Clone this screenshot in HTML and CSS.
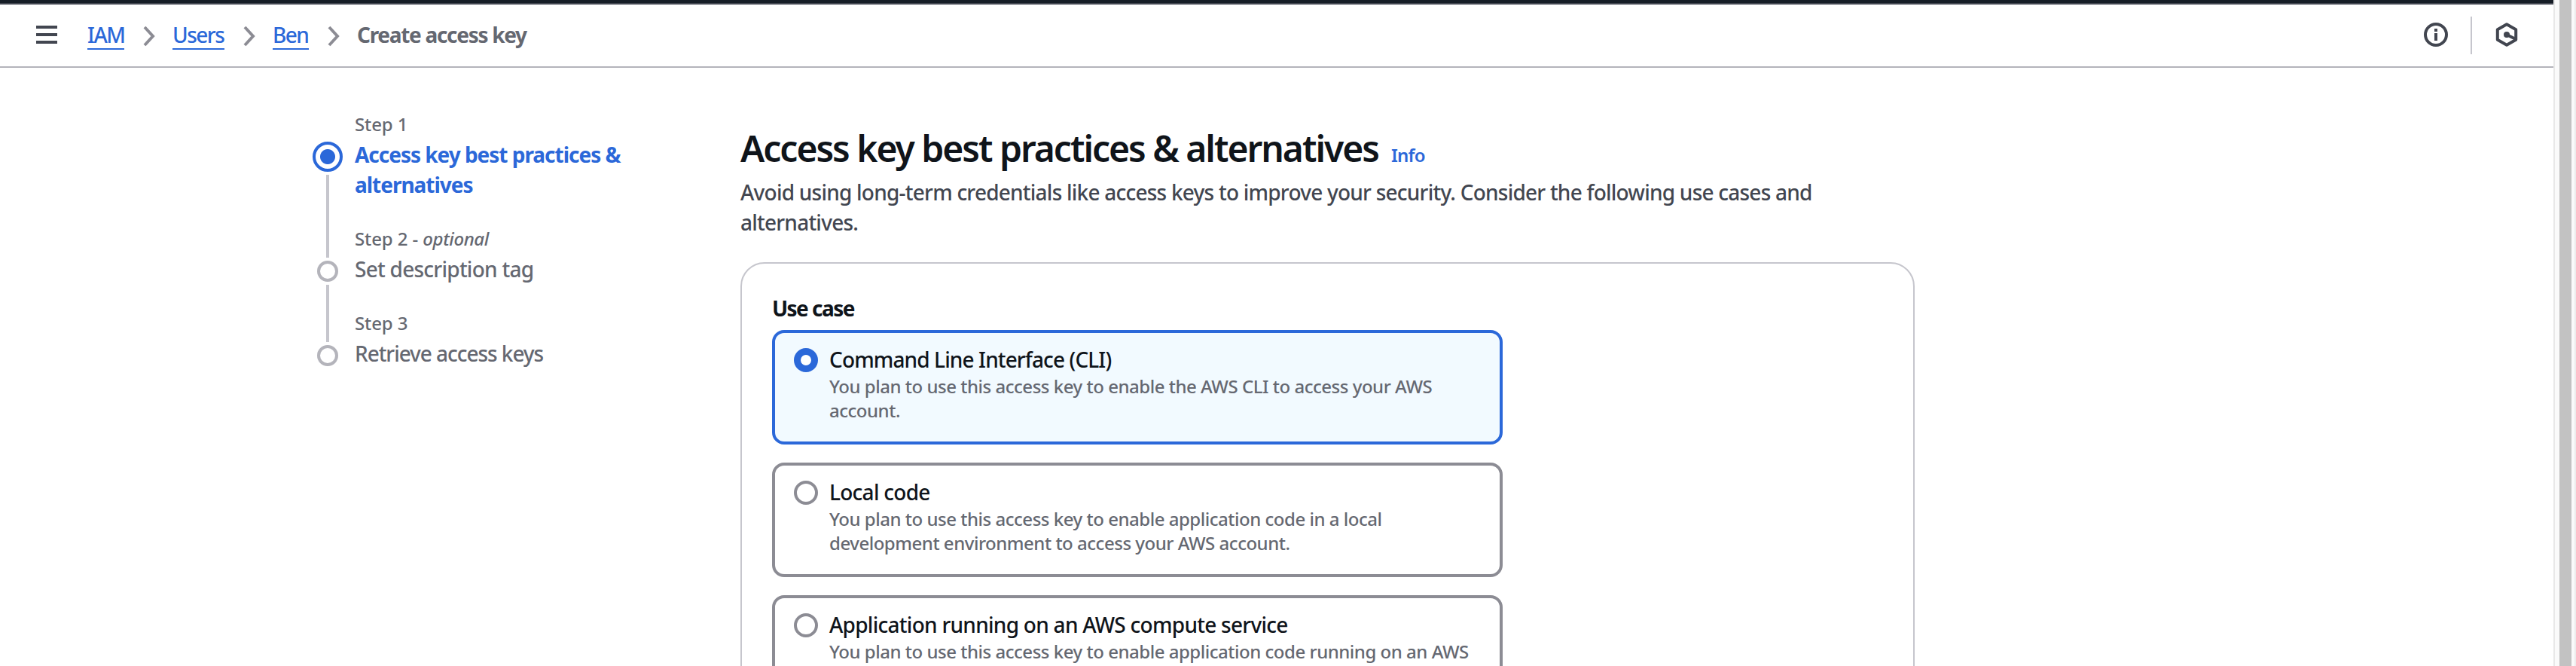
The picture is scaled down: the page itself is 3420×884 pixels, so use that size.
FILE: index.html
```html
<!DOCTYPE html>
<html lang="en">
<head>
<meta charset="utf-8">
<title>Create access key | IAM</title>
<link rel="stylesheet" href="styles.css">
</head>
<body>
<div class="window">
  <div class="page">
    <div class="topnav"></div>
    <header class="toolbar">
      <svg class="menu" width="28" height="24" viewBox="0 0 28 24"><path d="M0 2h28M0 12h28M0 22h28" stroke="#424650" stroke-width="4"/></svg>
      <nav class="crumbs">
        <a class="crumb crumb-iam">IAM</a>
        <svg class="chev" width="16" height="28" viewBox="0 0 16 28"><path d="M2 2l11 12L2 26" fill="none" stroke="#8c8c94" stroke-width="4"/></svg>
        <a class="crumb crumb-users">Users</a>
        <svg class="chev" width="16" height="28" viewBox="0 0 16 28"><path d="M2 2l11 12L2 26" fill="none" stroke="#8c8c94" stroke-width="4"/></svg>
        <a class="crumb crumb-ben">Ben</a>
        <svg class="chev" width="16" height="28" viewBox="0 0 16 28"><path d="M2 2l11 12L2 26" fill="none" stroke="#8c8c94" stroke-width="4"/></svg>
        <span class="crumb-current">Create access key</span>
      </nav>
      <div class="tools">
        <svg width="32" height="32" viewBox="0 0 32 32"><circle cx="16" cy="16" r="14" fill="none" stroke="#424650" stroke-width="4"/><path d="M14 8h4v4h-4zM14 14h4v10h-4z" fill="#424650"/></svg>
        <span class="divider"></span>
        <svg width="32" height="32" viewBox="0 0 32 32"><path d="M16 2.200l12.200 7v13.600L16 29.800l-12.200-7V9.200z" fill="none" stroke="#424650" stroke-width="4" stroke-linejoin="round"/><path d="M16 16l11 5.500" stroke="#424650" stroke-width="4"/><circle cx="16" cy="16" r="4" fill="#424650"/></svg>
      </div>
    </header>
    <div class="layout">
      <aside class="steps">
        <div class="rail">
          <span class="dot-active"></span>
          <span class="line line-long"></span>
          <span class="dot"></span>
          <span class="line line-short"></span>
          <span class="dot"></span>
        </div>
        <div class="step-list">
          <div class="step"><div class="step-label">Step 1</div><div class="step-title current">Access key best practices &amp;<br>alternatives</div></div>
          <div class="step"><div class="step-label">Step 2 - <em>optional</em></div><div class="step-title">Set description tag</div></div>
          <div class="step"><div class="step-label">Step 3</div><div class="step-title retrieve">Retrieve access keys</div></div>
        </div>
      </aside>
      <main class="main">
        <div class="heading"><h1>Access key best practices &amp; alternatives</h1><a class="info">Info</a></div>
        <p class="intro">Avoid using long-term credentials like access keys to improve your security. Consider the following use cases and<br>alternatives.</p>
        <section class="panel">
          <div class="field">Use case</div>
          <div class="cards">
            <div class="card selected">
              <span class="radio"></span>
              <div><div class="card-title cli">Command Line Interface (CLI)</div><div class="card-desc">You plan to use this access key to enable the AWS CLI to access your AWS<br>account.</div></div>
            </div>
            <div class="card">
              <span class="radio"></span>
              <div><div class="card-title">Local code</div><div class="card-desc">You plan to use this access key to enable application code in a local<br>development environment to access your AWS account.</div></div>
            </div>
            <div class="card">
              <span class="radio"></span>
              <div><div class="card-title">Application running on an AWS compute service</div><div class="card-desc">You plan to use this access key to enable application code running on an AWS</div></div>
            </div>
          </div>
        </section>
      </main>
    </div>
  </div>
  <div class="scrollbar"><span class="thumb"></span></div>
</div>
</body>
</html>
```
FILE: styles.css
```css
* { box-sizing: border-box; }
body {
  margin: 0;
  background: #fff;
  color: #0f141a;
  font-family: "Noto Sans", "Open Sans", sans-serif;
  font-size: 28px;
  font-weight: 500;
  line-height: 40px;
  white-space: nowrap;
}
.window { display: flex; width: 3420px; height: 884px; overflow: hidden; }
.page { width: 3390px; height: 884px; overflow: hidden; }
.scrollbar {
  width: 30px;
  padding: 0 6px;
  background: #fafafa;
  border-left: 2px solid #e8e8e8;
  border-right: 2px solid #ededed;
}
.thumb { display: block; width: 16px; height: 100%; background: #c2c2c2; }
.topnav { height: 6px; background: #161d26; border-bottom: 2px solid #424650; }

.toolbar {
  display: flex;
  align-items: flex-start;
  height: 84px;
  padding: 0 46px 0 48px;
  border-bottom: 2px solid #b4b4bb;
}
.menu { margin-top: 28px; }
.crumbs { display: flex; padding: 20px 0 0 40px; }
.crumb { height: 40px; border-bottom: 2px solid #2b68d9; color: #2b68d9; }
.crumb-iam { width: 49px; letter-spacing: -1.5px; }
.crumb-users { width: 69px; letter-spacing: -1.5px; }
.crumb-ben { width: 48px; letter-spacing: -1.6px; }
.chev { margin: 8px 23px 0 25px; }
.crumb-current { color: #656871; font-weight: 700; letter-spacing: -1.3px; }
.tools { display: flex; margin-left: auto; padding-top: 16px; }
.tools svg { margin-top: 8px; }
.divider { width: 2px; height: 50px; margin: 0 30px; background: #c6c6cd; }

.layout { display: flex; align-items: flex-start; padding-left: 415px; }
.steps { display: flex; gap: 16px; width: 568px; padding-top: 59px; }
.rail { display: flex; flex-direction: column; align-items: center; gap: 4px; width: 40px; padding-top: 39px; }
.dot-active {
  width: 40px;
  height: 40px;
  border: 4px solid #2b68d9;
  border-radius: 50%;
  background: radial-gradient(circle, #2b68d9 9.5px, #fff 10.5px);
}
.dot { width: 28px; height: 28px; border: 4px solid #b4b4bb; border-radius: 50%; }
.line { width: 4px; background: #c6c6cd; }
.line-long { height: 110px; }
.line-short { height: 76px; }
.step-list { display: flex; flex-direction: column; gap: 36px; color: #656871; }
.step-label { margin-bottom: 4px; font-size: 24px; line-height: 32px; letter-spacing: -0.1px; }
.step-label em { letter-spacing: -0.4px; }
.step-title { letter-spacing: -0.74px; }
.retrieve { letter-spacing: -1.05px; }
.current { color: #2b68d9; font-weight: 700; letter-spacing: -1.02px; }

.main { width: 1559px; padding-top: 77px; }
.heading { display: flex; align-items: baseline; height: 60px; }
h1 { width: 864px; margin: 0; font-size: 48px; font-weight: 600; line-height: 60px; letter-spacing: -2.02px; }
.info { color: #2b68d9; font-size: 24px; font-weight: 600; letter-spacing: -0.8px; }
.intro { margin: 8px 0 33px; color: #424650; letter-spacing: -0.77px; }
.panel { height: 700px; padding: 39px 40px 0; border: 2px solid #c6c6cd; border-radius: 32px; }
.field { font-weight: 700; letter-spacing: -1.55px; }
.cards { display: flex; flex-direction: column; gap: 24px; width: 970px; padding-top: 9px; }
.card {
  display: flex;
  gap: 15px;
  height: 152px;
  padding: 15px 25px;
  border: 4px solid #8c8c94;
  border-radius: 16px;
}
.radio { width: 32px; height: 32px; margin-top: 5px; border: 4px solid #8c8c94; border-radius: 50%; }
.card-title { letter-spacing: -0.73px; }
.cli { letter-spacing: -0.88px; }
.card-desc { color: #656871; font-size: 24px; line-height: 32px; letter-spacing: -0.48px; }
.selected { border-color: #2b68d9; background: #f2faff; }
.selected .radio { border: 9.5px solid #2b68d9; background: #fff; }
```
